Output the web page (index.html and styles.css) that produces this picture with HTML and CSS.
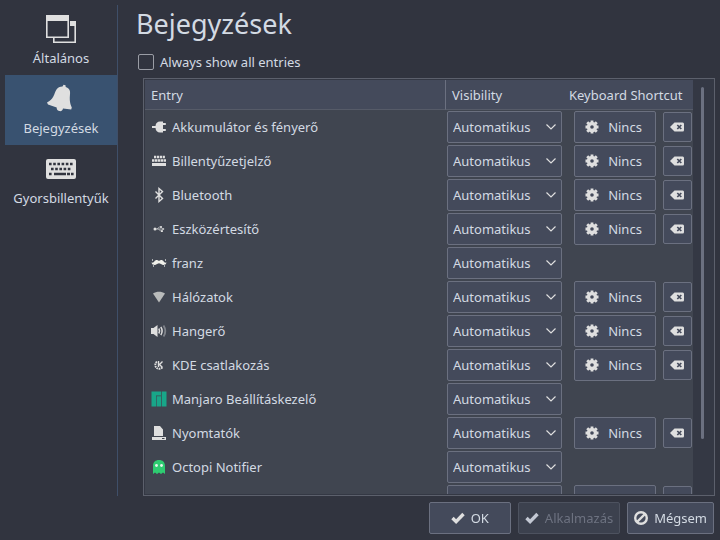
FILE: index.html
```
<!DOCTYPE html>
<html lang="hu">
<head>
  <meta charset="UTF-8">
  <meta name="viewport" content="width=device-width, initial-scale=1.0">
  <title>Bejegyzések</title>
  <link rel="stylesheet" href="styles.css">
</head>
<body>
  <svg class="sprite" aria-hidden="true">
    <symbol id="i-chevron" viewBox="0 0 12 12"><path d="M1.500 3.500L6 8l4.500-4.500" fill="none" stroke="currentColor" stroke-width="1.200"/></symbol>
    <symbol id="i-gear" viewBox="0 0 14 14">
      <circle cx="7" cy="7" r="3.500" fill="none" stroke="currentColor" stroke-width="3.400"/>
      <path d="M7 0.500v2M7 11.500v2M0.500 7h2M11.500 7h2M2.200 2.200l1.600 1.600M10.200 10.200l1.600 1.600M2.200 11.800l1.600-1.600M10.200 3.800l1.600-1.600" stroke="currentColor" stroke-width="2.800"/>
    </symbol>
    <symbol id="i-clear" viewBox="0 0 14 10">
      <path fill="currentColor" d="M0 5L4.500 0.500h8.200Q14 0.500 14 2v6Q14 9.500 12.700 9.500H4.500z"/>
      <path d="M7.300 3l4 4M11.300 3l-4 4" stroke="#444a5b" stroke-width="1.700"/>
    </symbol>
    <symbol id="i-check" viewBox="0 0 14 12"><path d="M1.500 6l3.600 3.600L12.500 2" fill="none" stroke="currentColor" stroke-width="3.400"/></symbol>
  </svg>

  <div class="content">
    <nav class="sidebar">
      <a href="#general" class="page">
        <svg width="32" height="32" viewBox="0 0 32 32">
          <path d="M25 9h5.200v20.200H8.800V25" fill="none" stroke="currentColor" stroke-width="1.600"/>
          <path d="M25 8h6v5h-6z" fill="currentColor"/>
          <path d="M1.800 3h21.400v21.200H1.800z" fill="none" stroke="currentColor" stroke-width="1.600"/>
          <path d="M1 2h23v6H1z" fill="currentColor"/>
        </svg>
        <span>Általános</span>
      </a>
      <a href="#entries" class="page active">
        <svg width="32" height="32" viewBox="0 0 32 32">
          <path fill="currentColor" d="M17.500 3.500l1-1.700 2 0.500 0.200 1.700c2.500 0.700 4 2.200 4.300 4.500 0.300 2-0.400 5-0.200 8.500 0.200 3 0.900 5 2 7.500l-0.600 2-8.200-0.900c-0.500 2.200-2 2.900-3.800 2.400-1.900-0.400-2.600-1.700-2.500-3.500L3 21.500 2 19.500c3-1.700 4.800-3.200 6.200-5.700 1.500-2.700 2-5.400 3.300-7.300 1.300-2 3.300-3 6-3z"/>
        </svg>
        <span>Bejegyzések</span>
      </a>
      <a href="#shortcuts" class="page">
        <svg width="32" height="32" viewBox="0 0 32 32">
          <rect x="1" y="6" width="30" height="20" rx="2" fill="currentColor"/>
          <path d="M4 11h25M6 16h21M4 21h3M26 21h3" fill="none" stroke="#31343f" stroke-width="2.400" stroke-dasharray="2.600 1.600"/>
          <path d="M9 21h12M22 21h3" stroke="#31343f" stroke-width="2.400"/>
        </svg>
        <span>Gyorsbillentyűk</span>
      </a>
    </nav>

    <main class="main">
      <h1>Bejegyzések</h1>
      <label class="show-all"><input type="checkbox"> Always show all entries</label>

      <div class="frame">
        <div class="scroll">
          <table>
            <thead>
              <tr><th class="c-entry">Entry</th><th class="c-vis">Visibility</th><th class="c-key">Keyboard Shortcut</th></tr>
            </thead>
            <tbody>
              <tr>
                <td><div class="entry">
                  <svg width="16" height="16" viewBox="0 0 16 16"><path fill="currentColor" d="M1 7h3.500C4.700 4.200 6.500 2.500 9 2.500h3V4h2.800v2H12v4h2.800v2H12v1.500H9C6.500 13.500 4.700 11.800 4.500 9H1z"/></svg>
                  Akkumulátor és fényerő</div></td>
                <td><div class="combo"><select aria-label="Akkumulátor és fényerő"><option>Automatikus</option></select><svg><use href="#i-chevron"/></svg></div></td>
                <td><div class="keys"><button class="btn key"><svg><use href="#i-gear"/></svg>Nincs</button><button class="btn clear" aria-label="Clear"><svg><use href="#i-clear"/></svg></button></div></td>
              </tr>
              <tr>
                <td><div class="entry">
                  <svg width="16" height="16" viewBox="0 0 16 16"><path d="M3 4h11" stroke="currentColor" stroke-width="2.400" stroke-dasharray="2.200 0.700"/><path d="M1 7.500h14" stroke="currentColor" stroke-width="2.600" stroke-dasharray="2.400 0.500"/><path d="M1 10h14v3H1z" fill="currentColor"/></svg>
                  Billentyűzetjelző</div></td>
                <td><div class="combo"><select aria-label="Billentyűzetjelző"><option>Automatikus</option></select><svg><use href="#i-chevron"/></svg></div></td>
                <td><div class="keys"><button class="btn key"><svg><use href="#i-gear"/></svg>Nincs</button><button class="btn clear" aria-label="Clear"><svg><use href="#i-clear"/></svg></button></div></td>
              </tr>
              <tr>
                <td><div class="entry">
                  <svg width="16" height="16" viewBox="0 0 16 16"><path d="M4.500 4.500l7 7-3.500 3V1.500l3.500 3-7 7" fill="none" stroke="currentColor" stroke-width="1.400"/></svg>
                  Bluetooth</div></td>
                <td><div class="combo"><select aria-label="Bluetooth"><option>Automatikus</option></select><svg><use href="#i-chevron"/></svg></div></td>
                <td><div class="keys"><button class="btn key"><svg><use href="#i-gear"/></svg>Nincs</button><button class="btn clear" aria-label="Clear"><svg><use href="#i-clear"/></svg></button></div></td>
              </tr>
              <tr>
                <td><div class="entry">
                  <svg width="16" height="16" viewBox="0 0 16 16"><path d="M4 8h9M6 8l2.500-2H11M7.500 8l2 2H12" fill="none" stroke="#b9bbbd" stroke-width="0.900"/><circle cx="4" cy="8" r="1.500" fill="currentColor"/><path d="M11.500 6.800l2 1.200-2 1.200z" fill="currentColor"/><circle cx="10" cy="6" r="1" fill="currentColor"/><path d="M10 9.200h1.800V11H10z" fill="currentColor"/></svg>
                  Eszközértesítő</div></td>
                <td><div class="combo"><select aria-label="Eszközértesítő"><option>Automatikus</option></select><svg><use href="#i-chevron"/></svg></div></td>
                <td><div class="keys"><button class="btn key"><svg><use href="#i-gear"/></svg>Nincs</button><button class="btn clear" aria-label="Clear"><svg><use href="#i-clear"/></svg></button></div></td>
              </tr>
              <tr>
                <td><div class="entry">
                  <svg width="16" height="16" viewBox="0 0 16 16"><path fill="#f0f0ea" d="M8 6c1.500-1.500 3.700-1.300 4.700 0.500 0.600 1 1.300 1.400 2.800 1-0.500 2.700-3.500 3.300-5.500 1.500L8 8.200 6 9C4 10.800 1 10.200 0.500 7.500c1.500 0.400 2.200 0 2.800-1C4.300 4.700 6.500 4.500 8 6z"/><path d="M1.500 4v2M14.500 4v2M2.500 9v3M13.500 9v3" stroke="#a9adb0"/></svg>
                  franz</div></td>
                <td><div class="combo"><select aria-label="franz"><option>Automatikus</option></select><svg><use href="#i-chevron"/></svg></div></td>
                <td></td>
              </tr>
              <tr>
                <td><div class="entry">
                  <svg width="16" height="16" viewBox="0 0 16 16"><path fill="#b9bbbb" d="M2 4.500C5.500 2.300 10.500 2.300 14 4.500L8 13.500z"/></svg>
                  Hálózatok</div></td>
                <td><div class="combo"><select aria-label="Hálózatok"><option>Automatikus</option></select><svg><use href="#i-chevron"/></svg></div></td>
                <td><div class="keys"><button class="btn key"><svg><use href="#i-gear"/></svg>Nincs</button><button class="btn clear" aria-label="Clear"><svg><use href="#i-clear"/></svg></button></div></td>
              </tr>
              <tr>
                <td><div class="entry">
                  <svg width="16" height="16" viewBox="0 0 16 16"><path fill="currentColor" d="M0 5h2.500L6.500 2v12l-4-3H0z"/><path d="M7.800 5.500q1.600 2.500 0 5M9.800 4q2.600 4 0 8" fill="none" stroke="currentColor" stroke-width="1.500"/><path d="M12.500 2.500q3.600 5.500 0 11" fill="none" stroke="#7f838a" stroke-width="1.800"/></svg>
                  Hangerő</div></td>
                <td><div class="combo"><select aria-label="Hangerő"><option>Automatikus</option></select><svg><use href="#i-chevron"/></svg></div></td>
                <td><div class="keys"><button class="btn key"><svg><use href="#i-gear"/></svg>Nincs</button><button class="btn clear" aria-label="Clear"><svg><use href="#i-clear"/></svg></button></div></td>
              </tr>
              <tr>
                <td><div class="entry">
                  <svg width="16" height="16" viewBox="0 0 16 16"><path d="M7.500 4v6M11.500 4.500L8.500 7.500l3 3" fill="none" stroke="currentColor" stroke-width="1.400"/><path d="M6 4.800C3.500 6 3.500 11.500 8 11.800c1.500 0 2.500-0.500 3.500-1.300" fill="none" stroke="currentColor" stroke-width="1.900" stroke-dasharray="1.600 0.700"/></svg>
                  KDE csatlakozás</div></td>
                <td><div class="combo"><select aria-label="KDE csatlakozás"><option>Automatikus</option></select><svg><use href="#i-chevron"/></svg></div></td>
                <td><div class="keys"><button class="btn key"><svg><use href="#i-gear"/></svg>Nincs</button><button class="btn clear" aria-label="Clear"><svg><use href="#i-clear"/></svg></button></div></td>
              </tr>
              <tr>
                <td><div class="entry">
                  <svg width="16" height="16" viewBox="0 0 16 16"><path fill="#18a689" d="M0.500 0.500h9.500v4H5v11H0.500zM5.600 5.200H10v10.300H5.600zM10.700 0.500h4.800v15h-4.800z"/></svg>
                  Manjaro Beállításkezelő</div></td>
                <td><div class="combo"><select aria-label="Manjaro Beállításkezelő"><option>Automatikus</option></select><svg><use href="#i-chevron"/></svg></div></td>
                <td></td>
              </tr>
              <tr>
                <td><div class="entry">
                  <svg width="16" height="16" viewBox="0 0 16 16"><path fill="currentColor" d="M3 1h6l3 3.500V11H3zM1 12h14v3H1z"/><path d="M11 13.500h2.500" stroke="#404550"/></svg>
                  Nyomtatók</div></td>
                <td><div class="combo"><select aria-label="Nyomtatók"><option>Automatikus</option></select><svg><use href="#i-chevron"/></svg></div></td>
                <td><div class="keys"><button class="btn key"><svg><use href="#i-gear"/></svg>Nincs</button><button class="btn clear" aria-label="Clear"><svg><use href="#i-clear"/></svg></button></div></td>
              </tr>
              <tr>
                <td><div class="entry">
                  <svg width="16" height="16" viewBox="0 0 16 16"><path fill="#2ecc71" d="M2 15V7c0-4 2.500-6 6-6s6 2 6 6v8l-2-1.500L10 15l-2-1.500L6 15l-2-1.500z"/><circle cx="5.500" cy="6.500" r="1.400" fill="#e8f5ec"/><circle cx="10.500" cy="6.500" r="1.400" fill="#e8f5ec"/></svg>
                  Octopi Notifier</div></td>
                <td><div class="combo"><select aria-label="Octopi Notifier"><option>Automatikus</option></select><svg><use href="#i-chevron"/></svg></div></td>
                <td></td>
              </tr>
              <tr>
                <td></td>
                <td><div class="combo"><select aria-label="Visibility"><option>Automatikus</option></select><svg><use href="#i-chevron"/></svg></div></td>
                <td><div class="keys"><button class="btn key"><svg><use href="#i-gear"/></svg>Nincs</button><button class="btn clear" aria-label="Clear"><svg><use href="#i-clear"/></svg></button></div></td>
              </tr>
            </tbody>
          </table>
        </div>
        <div class="track"><div class="thumb"></div></div>
      </div>
    </main>
  </div>

  <footer class="actions">
    <button class="btn ok"><svg width="14" height="12"><use href="#i-check"/></svg>OK</button>
    <button class="btn" disabled><svg width="14" height="12"><use href="#i-check"/></svg>Alkalmazás</button>
    <button class="btn"><svg width="14" height="14" viewBox="1 1 14 14"><circle cx="8" cy="8" r="5.800" fill="none" stroke="currentColor" stroke-width="2.400"/><path d="M4 12l8-8" stroke="currentColor" stroke-width="2.400"/></svg>Mégsem</button>
  </footer>
</body>
</html>
```

FILE: styles.css
```
* { box-sizing: border-box; }
body { display: flex; flex-direction: column; height: 100vh; margin: 0; padding: 5px; background: #31343f; color: #d3dae3; font: 13px/18px "Noto Sans", sans-serif; }
svg { display: block; flex: none; color: #dfdfdf; }
.sprite { position: absolute; width: 0; height: 0; }

.content { flex: 1; display: flex; min-height: 0; }
.sidebar { width: 113px; border-right: 1px solid #3f4f69; }
.page { display: flex; flex-direction: column; align-items: center; gap: 4px; height: 70px; padding-top: 8px; color: inherit; text-decoration: none; }
.page.active { background: #395270; }

.main { flex: 1; display: flex; flex-direction: column; min-width: 0; padding-left: 18px; }
h1 { margin: 0; font-size: 27px; line-height: 38px; font-weight: 400; }
.show-all { display: flex; align-items: center; gap: 6px; height: 28px; margin: 5px 0 2px 2px; }
.show-all input { appearance: none; width: 16px; height: 16px; margin: 0; border: 1px solid #9a9da5; border-radius: 2px; }

.frame { flex: 1; display: flex; min-height: 0; margin-left: 7px; padding: 1px; border: 1px solid #5c606c; background: #343844; }
.scroll { flex: 1; overflow-y: auto; scrollbar-width: none; background: #404550; }
table { width: 100%; table-layout: fixed; border-collapse: separate; border-spacing: 0; }
th { height: 30px; padding: 0 6px; background: #444a5b; border-bottom: 1px solid #565b68; font-weight: 400; text-align: left; white-space: nowrap; }
.c-entry { border-right: 1px solid #6b7080; }
.c-vis { width: 117px; }
.c-key { width: 130px; }
td { height: 34px; padding: 0 0 0 1px; }
.entry { display: flex; align-items: center; gap: 5px; padding-left: 5px; }

.combo { display: grid; grid-template-columns: 1fr 17px; align-items: center; width: 115px; }
.combo select { grid-area: 1 / 1 / 2 / 3; appearance: none; height: 32px; padding: 0 5px; background: #444a5b; border: 1px solid #6b7080; border-radius: 2px; color: inherit; font: inherit; }
.combo svg { grid-area: 1 / 2; width: 12px; height: 12px; pointer-events: none; }

.btn { display: flex; align-items: center; justify-content: center; gap: 6px; height: 32px; padding: 0 6px; background: #444a5b; border: 1px solid #6b7080; border-radius: 2px; color: inherit; font: inherit; }
.btn:disabled { background: #3c414e; border-color: #4d525f; color: #6d7280; }
.btn:disabled svg { color: #c3c8d3; }
.keys { display: flex; align-items: center; gap: 7px; padding-left: 10px; }
.key { width: 82px; gap: 9px; padding: 0 9px 0 6px; }
.key svg { width: 14px; height: 14px; }
.clear { width: 29px; height: 30px; padding: 0 7px 0 6px; }
.clear svg { width: 14px; height: 10px; }

.track { width: 20px; padding: 7px 8px; }
.thumb { width: 3px; height: 88%; border-radius: 2px; background: #6b7080; }

.actions { display: flex; justify-content: flex-end; gap: 7px; padding: 6px 1px 1px 0; }
.ok { width: 82px; }
```
